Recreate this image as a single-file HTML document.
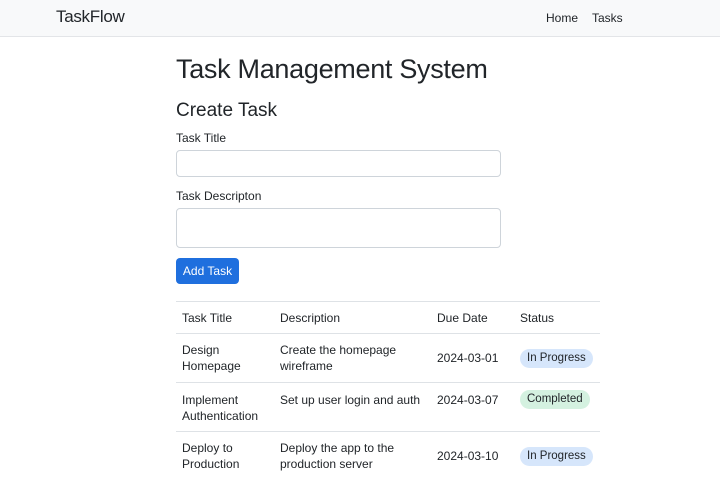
<!DOCTYPE html>
<html><head><style>
*{box-sizing:border-box;margin:0;padding:0}
body{width:720px;height:495px;overflow:hidden;background:#fff;font-family:"Liberation Sans",sans-serif;color:#212529}
.nav{height:37px;background:#f8f9fa;border-bottom:1px solid #e3e5e8;position:relative}
.brand{position:absolute;left:56px;top:7px;font-size:17px;letter-spacing:-0.3px}
.nl{position:absolute;top:11px;font-size:12px}
h1{position:absolute;left:176px;top:54px;font-size:27px;font-weight:400;letter-spacing:-0.3px}
h2{position:absolute;left:176px;top:100px;font-size:19px;font-weight:400}
.lbl{position:absolute;left:176px;font-size:12px}
.in{position:absolute;left:176px;width:325px;border:1px solid #ced4da;border-radius:4px;background:#fff}
.btn{position:absolute;left:176px;top:258px;width:63px;height:26px;background:#1f6fde;color:#fff;border-radius:4px;font-size:12px;text-align:center;line-height:26px}
table{position:absolute;left:176px;top:301px;width:424px;border-collapse:collapse;font-size:12px;line-height:16px;table-layout:fixed}
td,th{text-align:left;font-weight:400;border-top:1px solid #dee2e6;padding:0 6px;vertical-align:middle;white-space:nowrap}
th{height:32px;font-weight:500}
td{height:49px}
.b{display:inline-block;padding:0 7px;border-radius:10px;height:19px;line-height:19px;font-size:11.5px}
.p{background:#d6e6fb}.g{background:#d4f1e0}
.t td{vertical-align:top;padding-top:9px}
</style></head><body>
<div class="nav"><span class="brand">TaskFlow</span><span class="nl" style="left:546px">Home</span><span class="nl" style="left:592px">Tasks</span></div>
<h1>Task Management System</h1>
<h2>Create Task</h2>
<div class="lbl" style="top:131px">Task Title</div>
<div class="in" style="top:150px;height:27px"></div>
<div class="lbl" style="top:189px">Task Descripton</div>
<div class="in" style="top:208px;height:40px"></div>
<div class="btn">Add Task</div>
<table>
<tr><th style="width:98px">Task Title</th><th style="width:157px">Description</th><th style="width:83px">Due Date</th><th>Status</th></tr>
<tr><td>Design<br>Homepage</td><td>Create the homepage<br>wireframe</td><td>2024-03-01</td><td><span class="b p">In Progress</span></td></tr>
<tr class="t"><td>Implement<br>Authentication</td><td>Set up user login and auth</td><td>2024-03-07</td><td style="padding-top:7px"><span class="b g">Completed</span></td></tr>
<tr><td>Deploy to<br>Production</td><td>Deploy the app to the<br>production server</td><td>2024-03-10</td><td><span class="b p">In Progress</span></td></tr>
</table>
</body></html>
